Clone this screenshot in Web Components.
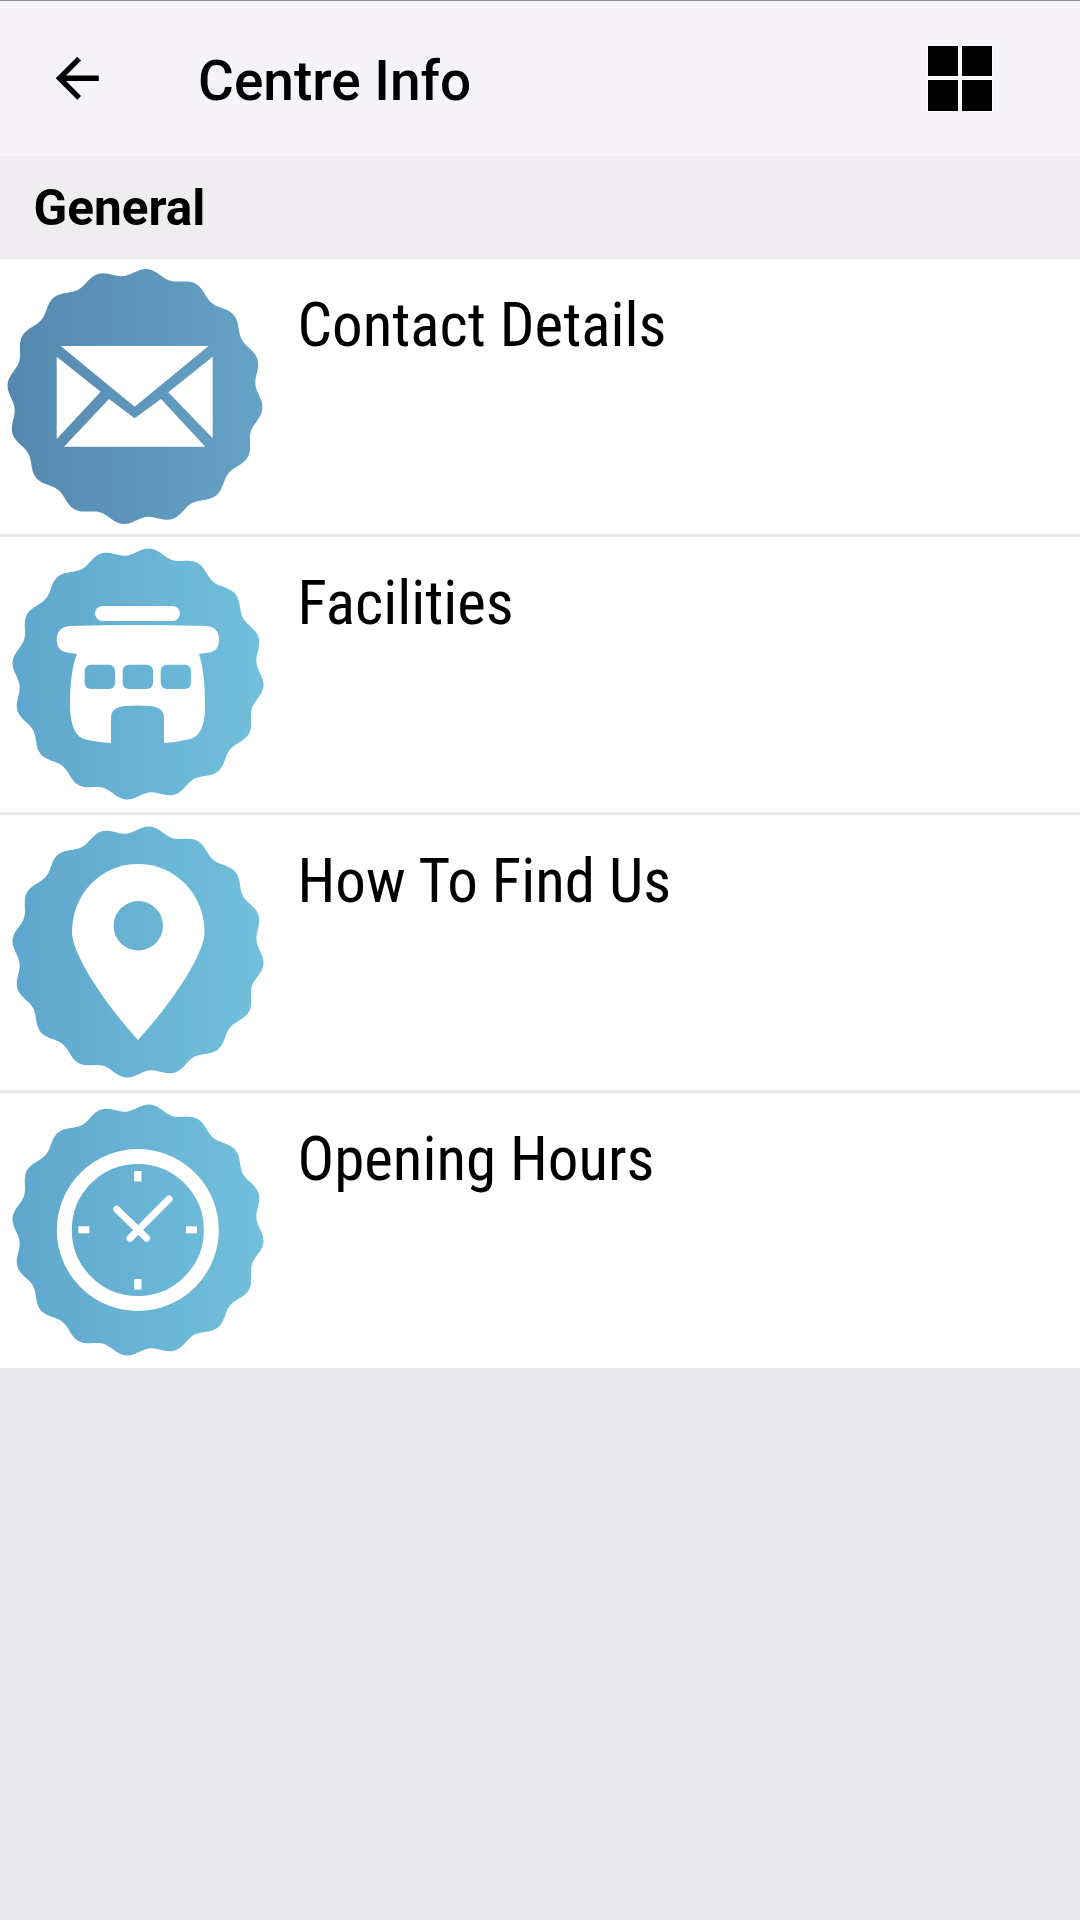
<!DOCTYPE html>
<html>
<head>
<meta charset="utf-8">
<title>Centre Info</title>
<style>
    html, body { margin: 0; padding: 0; background: #e9e8eb; }
    body { width: 1080px; min-height: 1920px; font-family: Roboto, "Liberation Sans", sans-serif; }
</style>
</head>
<body>
<app-bar heading="Centre Info"></app-bar>
<section-head>General</section-head>
<info-row icon="mail" shade="dark">Contact Details</info-row>
<info-row icon="building">Facilities</info-row>
<info-row icon="pin">How To Find Us</info-row>
<info-row icon="clock" last>Opening Hours</info-row>

<script>
"use strict";

/* [ app-bar ]
=================================== */
class AppBar extends HTMLElement {
    constructor() {
        super();
        this.attachShadow( { mode: "open" } ).innerHTML = `
<style>
    :host { display: flex; align-items: center; box-sizing: border-box; height: 156px; padding: 0 88px 0 44.5px; background: #f6f4f8; border-top: 1px solid #8f8e91; color: #000; }
    svg.back { width: 64.5px; height: 64.5px; flex: none; fill: #000; margin-top: -1px; }
    h1 { flex: 1; margin: 5px 0 0 89px; font: 500 55px/1 Roboto, sans-serif; }
    .tiles { display: grid; grid-template-columns: 30px 30px; grid-auto-rows: 30.5px; gap: 4px 4.5px; margin-top: -1px; }
    .tiles i { background: #000; outline: 1px solid #ffffffb0; }
</style>
<svg class="back" viewBox="0 0 24 24"><path d="M20 11H7.83l5.59-5.59L12 4l-8 8 8 8 1.41-1.41L7.83 13H20v-2z"/></svg>
<h1></h1>
<div class="tiles"><i></i><i></i><i></i><i></i></div>`;
    }
    connectedCallback() {
        this.shadowRoot.querySelector( "h1" ).textContent = this.getAttribute( "heading" );
    }
}
customElements.define( "app-bar", AppBar );

/* [ section-head ]
=================================== */
class SectionHead extends HTMLElement {
    constructor() {
        super();
        this.attachShadow( { mode: "open" } ).innerHTML = `
<style>
    :host { display: block; box-sizing: border-box; height: 103px; padding: 23px 0 0 33.5px; background: #efedf0; border-bottom: 1px solid #e8e7ea; color: #000; font: 700 49.5px/58px Roboto, sans-serif; }
</style>
<slot></slot>`;
    }
}
customElements.define( "section-head", SectionHead );

/* [ badge outline ]
=================================== */
const wavyCircle = ( cx, cy, r, amp ) => {
    let d = "";
    for( let i = 0; i <= 720; i++ ) {
        let t = i / 720 * Math.PI * 2,
            rr = r + amp * Math.cos( 16 * ( t - 5.6 * Math.PI / 180 ) ),
            x = cx + rr * Math.sin( t ),
            y = cy - rr * Math.cos( t );
        d += ( i ? "L" : "M" ) + x.toFixed( 2 ) + " " + y.toFixed( 2 );
    }
    return d + "Z";
};

/* icons: white shapes over the badge, holes take the badge gradient */
const glyphs = {
    mail: () => `<g fill="#fff">
        <path d="M60.7 87H208.5L134.7 147.7Z"/>
        <path d="M56.7 97.7L100.7 132.7L56.7 180Z"/>
        <path d="M212.7 97.7L168.3 133.3L212.7 179.3Z"/>
        <path d="M64 187.7L109 140L134.7 159.3L161 140L205.3 187.7Z"/>
    </g>`,
    building: id => `<rect fill="#fff" x="95" y="69" width="85" height="15" rx="7.5"/>
        <path fill="#fff" d="M70 89Q137 87 206 89Q219 90 219 102.5Q219 116 205 116L199 117C203 130 205 145 205 170Q205 198 190 202Q178 205 164 206V181Q164 170 150 169Q137 168 125 169Q111 170 111 181V206Q96 205 84 202Q71 198 70 170C70 145 72 130 77 117L70 116Q56.7 115 56.7 102.5Q57 90 70 89Z"/>
        <g fill="url(#${id})">
            <rect x="84.7" y="127.7" width="30.3" height="24.3" rx="6"/>
            <rect x="122.7" y="127.7" width="30.3" height="24.3" rx="6"/>
            <rect x="160.7" y="127.7" width="30.3" height="24.3" rx="6"/>
        </g>`,
    pin: id => `<path fill="#fff" d="M138 49C175 49 204.5 79 204.5 117C204.5 140 170 190 138 225C106 190 72 140 72 117C72 79 101 49 138 49Z"/>
        <circle fill="url(#${id})" cx="138.3" cy="110.7" r="24.7"/>`,
    clock: () => `<circle cx="137.8" cy="137" r="73.5" fill="none" stroke="#fff" stroke-width="15"/>
        <g fill="#fff">
            <rect x="134.2" y="78" width="7.3" height="10.5"/>
            <rect x="134.2" y="186" width="7.3" height="10.5"/>
            <rect x="78.3" y="133.3" width="11" height="7"/>
            <rect x="186" y="133.3" width="11" height="7"/>
        </g>
        <path d="M116.7 116.3L146.7 145.3M169 106L130 145.3" fill="none" stroke="#fff" stroke-width="7" stroke-linecap="round"/>`
};

/* [ info-row ]
=================================== */
class InfoRow extends HTMLElement {
    constructor() {
        super();
        this.attachShadow( { mode: "open" } ).innerHTML = `
<style>
    :host { display: flex; height: 278px; box-sizing: border-box; background: #fff; color: #000; border-bottom: 3px solid #e8e7ea; }
    :host([last]) { height: 275px; border-bottom: 0; }
    svg { width: 275px; height: 275px; flex: none; }
    span { margin: 30px 0 0 22.5px; font: 400 61px/72px Roboto, sans-serif; font-stretch: 75%; display: block; }
</style>
<svg viewBox="0 0 275 275"></svg>
<span><slot></slot></span>`;
    }
    connectedCallback() {
        let svg = this.shadowRoot.querySelector( "svg" ),
            icon = this.getAttribute( "icon" ),
            dark = this.getAttribute( "shade" ) == "dark",
            id = "g-" + icon,
            badge = dark ? wavyCircle( 135, 137.5, 124.5, 3.5 ) : wavyCircle( 138, 137, 122.5, 3.5 );
        svg.innerHTML = `<defs><linearGradient id="${id}" gradientUnits="userSpaceOnUse" x1="8" x2="264" y1="0" y2="0">
            <stop offset="0" stop-color="${dark ? "#5588ae" : "#5ea6cc"}"/>
            <stop offset="1" stop-color="${dark ? "#66a3c7" : "#72c0dc"}"/>
        </linearGradient></defs>
        <path fill="url(#${id})" d="${badge}"/>${glyphs[ icon ]( id )}`;
    }
}
customElements.define( "info-row", InfoRow );
</script>
</body>
</html>
